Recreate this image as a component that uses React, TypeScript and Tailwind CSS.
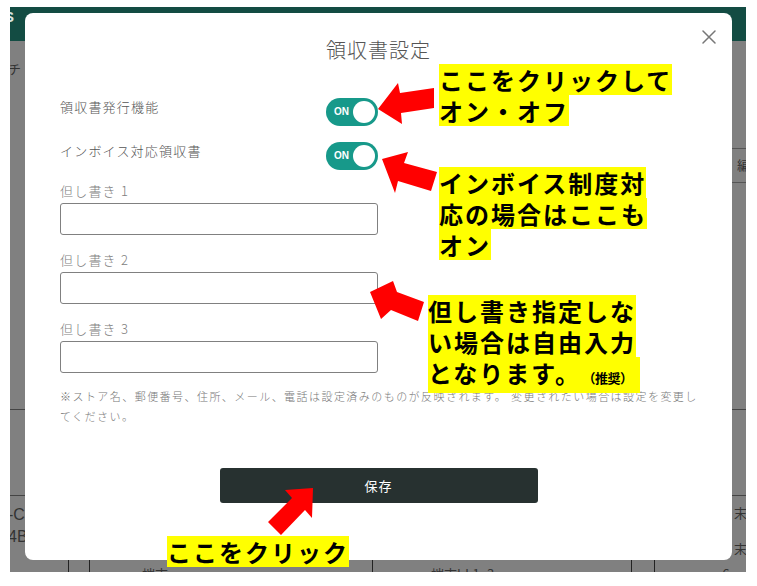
const jp = "font-['Noto_Sans_CJK_JP','Noto_Sans',sans-serif]";

function Toggle() {
  return (
    <button
      type="button"
      className="flex h-[28px] w-[52px] items-center justify-between rounded-full bg-[#17998a] pl-[8px] pr-[3px]"
    >
      <span className="font-['Liberation_Sans',sans-serif] text-[10px] font-bold leading-none text-white">
        ON
      </span>
      <span className="h-[22px] w-[22px] rounded-full bg-white" />
    </button>
  );
}

function BackgroundPage() {
  return (
    <div className="flex h-full flex-col text-[13px] text-[#333]">
      <div className="flex h-[34px] shrink-0 items-start bg-[#134c43]">
        <span className="-ml-[6px] font-['Liberation_Sans',sans-serif] text-[15px] font-bold leading-[20px] text-[#d9e4e1]">
          S
        </span>
      </div>
      <div className="flex min-h-0 flex-1 overflow-hidden">
        <div className="flex w-[15px] flex-col overflow-hidden">
          <div className="h-[368px] shrink-0 pt-[20px] leading-[16px]">
            <span className="-ml-[2px] block">チ</span>
          </div>
          <div className="h-[86px] shrink-0 border-t border-[#444]" />
          <div className="min-h-0 flex-1 border-t border-[#444] pt-[8px] font-['Liberation_Sans',sans-serif] text-[16px] leading-[22px]">
            <div className="-ml-[2px]">-C</div>
            <div className="-ml-[2px]">4B</div>
          </div>
        </div>
        <div className="flex-1" />
        <div className="flex w-[14px] flex-col overflow-hidden">
          <div className="h-[107px] shrink-0" />
          <div className="h-[35px] shrink-0 border-y border-[#555] pl-[5px] pt-[8px] leading-[16px]">編</div>
          <div className="h-[226px] shrink-0" />
          <div className="h-[86px] shrink-0 border-t border-[#444]" />
          <div className="min-h-0 flex-1 border-t border-[#444] pl-[2px] pt-[8px] leading-[18px]">
            <div>末:</div>
            <div className="mt-[18px]">末I</div>
          </div>
        </div>
      </div>
      <div className="flex h-[17px] shrink-0 overflow-hidden leading-[22px]">
        <div className="w-[58px]" />
        <div className="w-[22px] border-x border-[#222]" />
        <div className="w-[283px] border-r border-[#222] pl-[52px] pt-[8px]">端末</div>
        <div className="w-[259px] border-r border-[#222] pl-[58px] pt-[8px]">端末Id:1_3</div>
        <div className="w-[23px] border-r border-[#222]" />
        <div className="flex-1 pl-[60px] pt-[8px]">a6ea</div>
      </div>
    </div>
  );
}

function ReceiptModal() {
  return (
    <div className="absolute left-[15px] top-[6px] h-[547px] w-[707px] rounded-[8px] bg-white px-[35px]">
      <button type="button" className="absolute right-[16px] top-[17px] h-[14px] w-[14px]">
        <svg width="14" height="14" viewBox="0 0 14 14">
          <path d="M1 1 13 13M13 1 1 13" stroke="#777" strokeWidth="1.5" strokeLinecap="round" />
        </svg>
      </button>
      <h2 className="pt-[23px] text-center text-[20px] font-light leading-[28px] tracking-[1px] text-[#555]">
        領収書設定
      </h2>
      <div className="mt-[34px] w-[318px]">
        <div className="flex items-start justify-between">
          <span className="text-[13px] font-light leading-[18px] tracking-[1.2px] text-[#555]">
            領収書発行機能
          </span>
          <Toggle />
        </div>
        <div className="mt-[16px] flex items-start justify-between">
          <span className="text-[13px] font-light leading-[18px] tracking-[1.2px] text-[#555]">
            インボイス対応領収書
          </span>
          <Toggle />
        </div>
        {[1, 2, 3].map((n) => (
          <div key={n} className={n === 1 ? "mt-[12px]" : "mt-[16px]"}>
            <label className="block text-[13px] font-light leading-[18px] tracking-[1.2px] text-[#808080]">
              但し書き {n}
            </label>
            <input
              type="text"
              className="mt-[3px] block h-[32px] w-full rounded-[3px] border border-[#808080] bg-white px-2 outline-none"
            />
          </div>
        ))}
      </div>
      <p className="-mr-[30px] mt-[13px] text-[11px] font-light leading-[20px] tracking-[1.45px] text-[#777]">
        <span className="whitespace-nowrap">
          ※ストア名、郵便番号、住所、メール、電話は設定済みのものが反映されます。 変更されたい場合は設定を変更し
        </span>
        <br />
        てください。
      </p>
      <button
        type="button"
        className="mx-auto mt-[42px] block h-[35px] w-[318px] rounded-[3px] bg-[#273130] text-[13px] tracking-[1px] text-white"
      >
        保存
      </button>
    </div>
  );
}

function Note({ lines, className }: { lines: React.ReactNode[]; className: string }) {
  return (
    <div className={`absolute text-[24px] font-bold leading-[31px] tracking-[2px] text-black ${className}`}>
      {lines.map((line, i) => (
        <div key={i} className="w-fit bg-[#ffff00]">
          {line}
        </div>
      ))}
    </div>
  );
}

function Arrows() {
  return (
    <svg
      className="pointer-events-none absolute left-0 top-0"
      width="736"
      height="565"
      viewBox="10 7 736 565"
    >
      <g fill="#ff0000">
        <polygon points="378,109 398,83 400,93 434,88 434,108 401,113 402,124" />
        <polygon points="382,159 408,152 404,163 437,172 431,191 398,181 395,193" />
        <polygon points="370,292 393,281 397,292 424,302 418,321 391,310 381,319" />
        <polygon points="313,488 285,490 292,498 268,522 281,535 305,510 312,518" />
      </g>
    </svg>
  );
}

export default function App() {
  return (
    <div className={`h-[586px] w-[757px] overflow-hidden bg-white pl-[10px] pt-[7px] ${jp}`}>
      <div className="relative h-[565px] w-[736px] overflow-hidden bg-[#808080]">
        <BackgroundPage />
        <ReceiptModal />
        <Arrows />
        <Note className="left-[429px] top-[57px]" lines={["ここをクリックして", "オン・オフ"]} />
        <Note
          className="left-[429px] top-[160px]"
          lines={["インボイス制度対", "応の場合はここも", "オン"]}
        />
        <Note
          className="left-[418px] top-[288px]"
          lines={[
            "但し書き指定しな",
            "い場合は自由入力",
            <>
              となります。
              <span className="ml-[8px] pr-[8px] text-[13px] tracking-[-0.5px]">（推奨）</span>
            </>,
          ]}
        />
        <Note className="left-[157px] top-[529px]" lines={["ここをクリック"]} />
      </div>
    </div>
  );
}
